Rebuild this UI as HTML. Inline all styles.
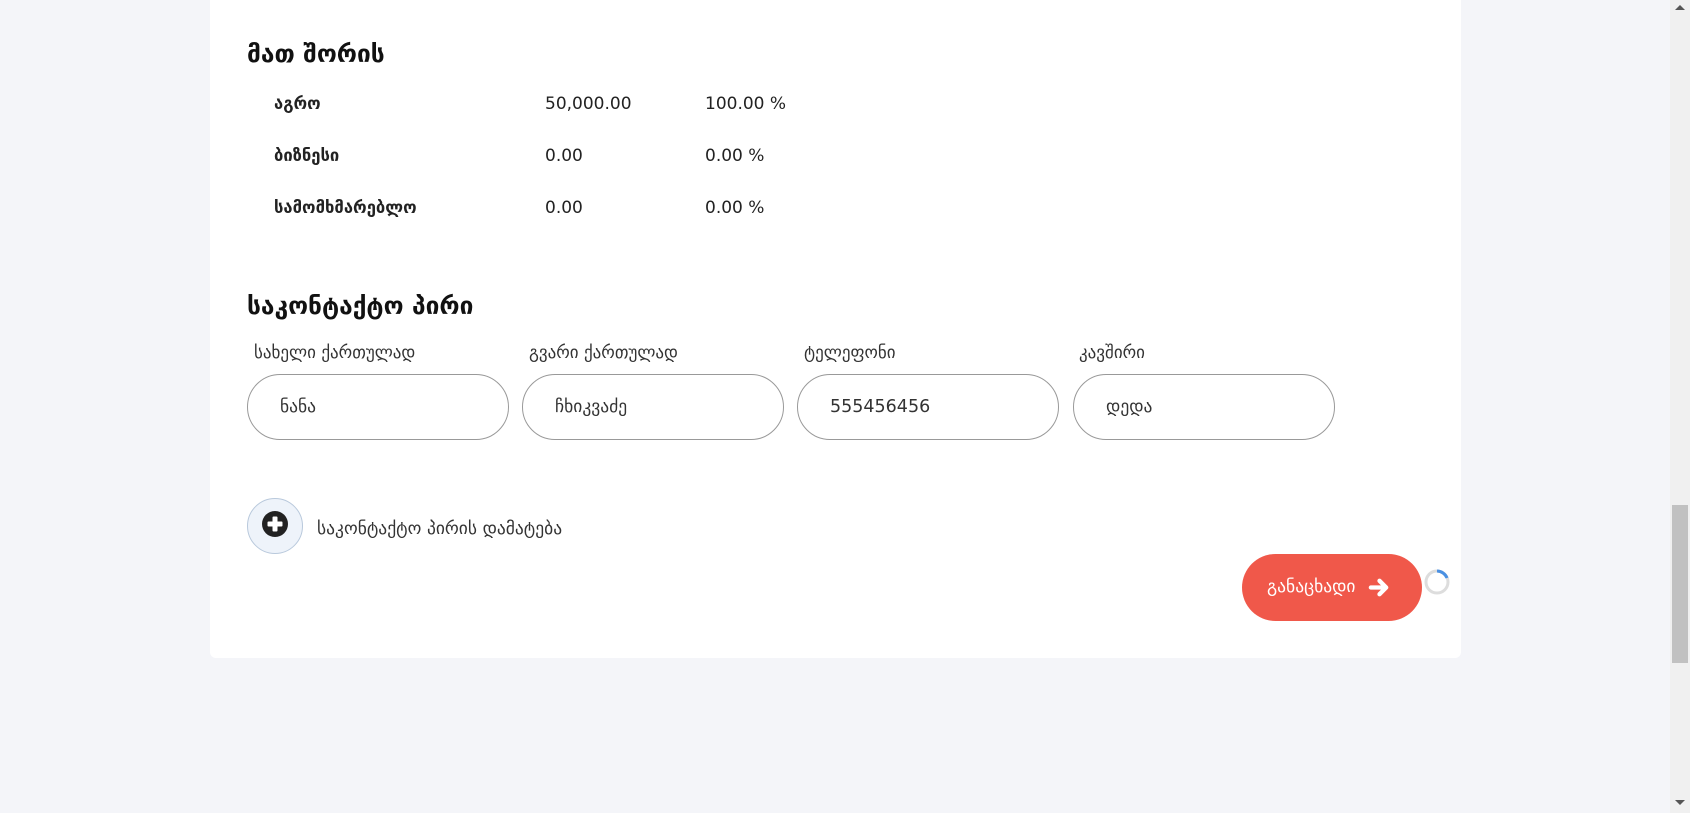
<!DOCTYPE html>
<html><head><meta charset="utf-8"><style>
*{box-sizing:border-box;margin:0;padding:0}
body{width:1690px;height:813px;background:#f4f5f9;font-family:"DejaVu Sans","Liberation Sans",sans-serif;color:#222;position:relative;overflow:hidden}
.card{position:absolute;left:210px;top:-10px;width:1251px;height:668px;background:#fff;border-radius:6px}
.abs{position:absolute;white-space:nowrap}
h2{position:absolute;font-size:24.5px;font-weight:bold;color:#111;white-space:nowrap}
.lbl{font-size:16.6px;font-weight:bold;color:#222}
.val{font-size:17px;color:#222}
.fl{font-size:17px;color:#333}
.inp{position:absolute;top:374px;width:262px;height:66px;border:1px solid #999;border-radius:33px;font-size:17.5px;color:#333;padding-left:32px;line-height:64px}
.sb{position:absolute;left:1670px;top:0;width:20px;height:813px;background:#f0f0f0}
</style></head><body>
<div class="card"></div>
<h2 style="left:247px;top:39px">მათ შორის</h2>
<div class="abs lbl" style="left:274px;top:94px">აგრო</div>
<div class="abs val" style="left:545px;top:94px">50,000.00</div>
<div class="abs val" style="left:705px;top:94px">100.00 %</div>
<div class="abs lbl" style="left:274px;top:146px">ბიზნესი</div>
<div class="abs val" style="left:545px;top:146px">0.00</div>
<div class="abs val" style="left:705px;top:146px">0.00 %</div>
<div class="abs lbl" style="left:274px;top:198px">სამომხმარებლო</div>
<div class="abs val" style="left:545px;top:198px">0.00</div>
<div class="abs val" style="left:705px;top:198px">0.00 %</div>
<h2 style="left:247px;top:291px">საკონტაქტო პირი</h2>
<div class="abs fl" style="left:254px;top:343px">სახელი ქართულად</div>
<div class="abs fl" style="left:529px;top:343px">გვარი ქართულად</div>
<div class="abs fl" style="left:804px;top:343px">ტელეფონი</div>
<div class="abs fl" style="left:1079px;top:343px">კავშირი</div>
<div class="inp" style="left:247px">ნანა</div>
<div class="inp" style="left:522px">ჩხიკვაძე</div>
<div class="inp" style="left:797px">555456456</div>
<div class="inp" style="left:1073px">დედა</div>
<div class="abs" style="left:247px;top:498px;width:56px;height:56px;border-radius:50%;background:#eef3fa;border:1px solid #b9c9dc"></div>
<svg class="abs" style="left:262px;top:511px" width="26" height="26" viewBox="0 0 26 26"><circle cx="13" cy="13" r="13" fill="#222"/><rect x="10.5" y="5.5" width="5" height="15" rx="1" fill="#fff"/><rect x="5.5" y="10.5" width="15" height="5" rx="1" fill="#fff"/></svg>
<div class="abs" style="left:317px;top:519px;font-size:17.5px;color:#333">საკონტაქტო პირის დამატება</div>
<div class="abs" style="left:1242px;top:554px;width:180px;height:67px;border-radius:34px;background:#f0584a;color:#fff;font-size:17.5px;line-height:67px;padding-left:25px">განაცხადი
<svg style="position:absolute;left:126px;top:22px" width="23" height="23" viewBox="0 0 24 24"><path d="M3 12h15M12 5l7 7-7 7" stroke="#fff" stroke-width="4.5" fill="none" stroke-linecap="round" stroke-linejoin="round"/></svg></div>
<svg class="abs" style="left:1424px;top:569px" width="26" height="26" viewBox="0 0 26 26"><circle cx="13" cy="13" r="11" stroke="#ddd" stroke-width="3" fill="none"/><path d="M13 2a11 11 0 0 1 10 7" stroke="#4a90e2" stroke-width="3" fill="none"/></svg>
<div class="sb"><div style="position:absolute;left:2px;top:505px;width:16px;height:158px;background:#c1c1c1"></div>
<div style="position:absolute;left:5px;top:800px;border-left:5px solid transparent;border-right:5px solid transparent;border-top:5px solid #555"></div>
<div style="position:absolute;left:5px;top:5px;border-left:5px solid transparent;border-right:5px solid transparent;border-bottom:5px solid #555"></div></div>
</body></html>
